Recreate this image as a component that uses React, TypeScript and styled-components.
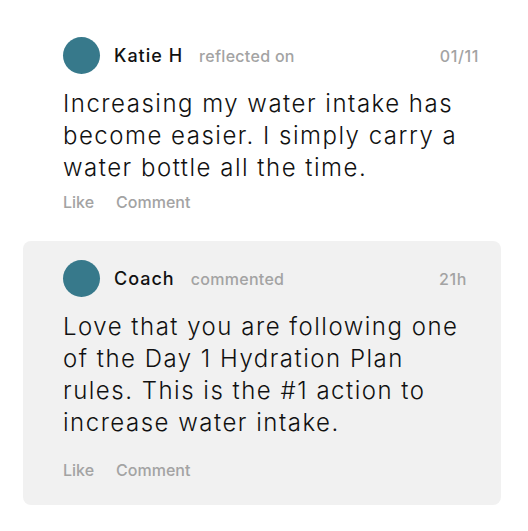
import React from "react";
import styled, { createGlobalStyle } from "styled-components";

const Global = createGlobalStyle`
  html, body { margin: 0; padding: 0; background: #ffffff; }
  body { font-family: Inter, "Noto Sans", sans-serif; color: #151515; }
`;

const Page = styled.div`
  width: 528px;
  padding: 37px 27px 0 23px;
  box-sizing: border-box;
  display: flex;
  flex-direction: column;
  gap: 29px;
`;

const Post = styled.div<{ $card?: boolean }>`
  display: flex;
  flex-direction: column;
  background: ${(p) => (p.$card ? "#f1f1f1" : "transparent")};
  border-radius: ${(p) => (p.$card ? "8px" : "0")};
  padding: ${(p) => (p.$card ? "19px 34px 25px 40px" : "0 22px 0 40px")};
`;

const Header = styled.div`
  display: flex;
  align-items: center;
  height: 37px;
`;

const Avatar = styled.div`
  width: 37px;
  height: 37px;
  border-radius: 50%;
  background: #37798b;
  flex: none;
`;

const Name = styled.span`
  font-size: 18px;
  font-weight: 500;
  letter-spacing: 1px;
  color: #111;
  margin-left: 14px;
`;

const Action = styled.span`
  font-size: 16px;
  font-weight: 500;
  letter-spacing: 0.3px;
  color: #a3a3a3;
  margin-left: 16px;
`;

const Time = styled.span`
  margin-left: auto;
  font-size: 16px;
  font-weight: 500;
  letter-spacing: 0.6px;
  color: #a3a3a3;
`;

const Body = styled.p<{ $extra?: number }>`
  margin: 14px 0 ${(p) => p.$extra ?? 0}px;
  font-size: 24px;
  line-height: 32px;
  font-weight: 300;
  letter-spacing: 1.5px;
  color: #111111;
`;

const Actions = styled.div`
  display: flex;
  gap: 22px;
  margin-top: 8px;
  font-size: 16px;
  line-height: 20px;
  font-weight: 500;
  color: #a3a3a3;
`;

type Item = { name: string; action: string; time: string; text: string; card?: boolean };

const items: Item[] = [
  {
    name: "Katie H",
    action: "reflected on",
    time: "01/11",
    text: "Increasing my water intake has become easier. I simply carry a water bottle all the time.",
  },
  {
    name: "Coach",
    action: "commented",
    time: "21h",
    text: "Love that you are following one of the Day 1 Hydration Plan rules. This is the #1 action to increase water intake.",
    card: true,
  },
];

export default function App() {
  return (
    <>
      <Global />
      <Page>
        {items.map((it) => (
          <Post key={it.name} $card={it.card}>
            <Header>
              <Avatar />
              <Name>{it.name}</Name>
              <Action>{it.action}</Action>
              <Time>{it.time}</Time>
            </Header>
            <Body $extra={it.card ? 13 : 0}>{it.text}</Body>
            <Actions>
              <span>Like</span>
              <span>Comment</span>
            </Actions>
          </Post>
        ))}
      </Page>
    </>
  );
}
